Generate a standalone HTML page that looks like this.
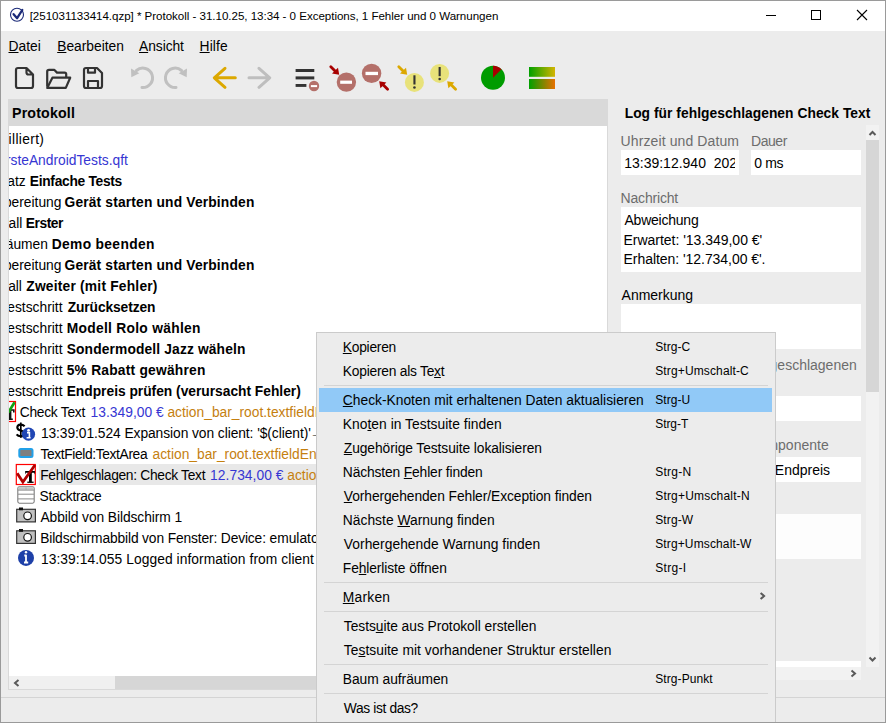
<!DOCTYPE html><html><head><meta charset="utf-8"><style>
html,body{margin:0;padding:0}
body{width:886px;height:723px;position:relative;overflow:hidden;background:#ececec;font-family:"Liberation Sans",sans-serif}
.t{position:absolute;white-space:pre;line-height:normal}
u{text-decoration:underline;text-underline-offset:1px;text-decoration-thickness:1px}
svg{position:absolute;overflow:visible}
</style></head><body>
<div style="position:absolute;left:0px;top:0px;width:886px;height:31px;background:#fff;"></div>
<svg style="left:0;top:0" width="40" height="31"><circle cx="17" cy="14.8" r="6.5" fill="none" stroke="#1b2a78" stroke-width="1.1"/><path d="M13.6 14.2 L17.1 18.2 L22.3 10" fill="none" stroke="#1b2a78" stroke-width="2.3" stroke-linejoin="round" stroke-linecap="round"/></svg>
<div class="t" style="left:29.70px;top:9.00px;font-size:11.6px;font-weight:400;color:#000;letter-spacing:-0.043px;">[251031133414.qzp] * Protokoll - 31.10.25, 13:34 - 0 Exceptions, 1 Fehler und 0 Warnungen</div>
<svg style="left:0;top:0" width="886" height="31"><path d="M766 15.5 H776" stroke="#000" stroke-width="1"/><rect x="811.5" y="10.5" width="9" height="9" fill="none" stroke="#000" stroke-width="1"/><path d="M857 10 L867 20 M867 10 L857 20" stroke="#000" stroke-width="1.1"/></svg>
<div class="t" style="left:8.50px;top:39.00px;font-size:13.8px;font-weight:400;color:#000;letter-spacing:0.025px;"><u>D</u>atei</div>
<div class="t" style="left:57.20px;top:39.00px;font-size:13.8px;font-weight:400;color:#000;"><u>B</u>earbeiten</div>
<div class="t" style="left:139.00px;top:39.00px;font-size:13.8px;font-weight:400;color:#000;letter-spacing:-0.05px;"><u>A</u>nsicht</div>
<div class="t" style="left:199.60px;top:39.00px;font-size:13.8px;font-weight:400;color:#000;letter-spacing:0.1px;"><u>H</u>ilfe</div>
<svg style="left:0;top:0" width="600" height="98">
<g fill="none" stroke="#333" stroke-width="2.2" stroke-linejoin="round" stroke-linecap="round">
<path d="M26.5 68 H18 Q16 68 16 70 V86 Q16 88 18 88 H31 Q33 88 33 86 V74.5 Z M26.5 68 V72.5 Q26.5 74.5 28.5 74.5 H33"/>
<path d="M47.2 86 V71.5 Q47.2 69.8 49 69.8 H54.2 L57 72.6 H64.6 Q66.2 72.6 66.2 74.2 V77"/>
<path d="M47.2 87.9 L52.4 77.7 H70.2 L65.8 87.9 Z"/>
<path d="M97 68 H86 Q84 68 84 70 V86 Q84 88 86 88 H100 Q102 88 102 86 V73 Z"/>
<path d="M88 68 V72.7 H95 V68"/>
<path d="M88 88 V81 H98 V88"/>
</g>
<g fill="none" stroke="#c0c0c0" stroke-width="3" stroke-linecap="round">
<path d="M142 87.5 A9.7 9.7 0 1 0 136.5 70.5"/>
<path d="M176 87.5 A9.7 9.7 0 1 1 181.5 70.5"/>
</g>
<path d="M131 68.5 L131.3 77.2 L139.3 73.2 Z" fill="#c0c0c0"/>
<path d="M187 68.5 L186.7 77.2 L178.7 73.2 Z" fill="#c0c0c0"/>
<g fill="none" stroke-width="3" stroke-linecap="round" stroke-linejoin="round">
<path d="M235.3 77.8 H214.5 M225 68.3 L214.3 77.8 L225 87.3" stroke="#dca800"/>
<path d="M249 77.8 H269.5 M259 68.3 L269.7 77.8 L259 87.3" stroke="#bebebe"/>
</g>
<g fill="#333"><rect x="295.6" y="69" width="18.7" height="3"/><rect x="295.6" y="76.4" width="18.7" height="3"/><rect x="295.6" y="84" width="10.8" height="2.9"/></g>
<circle cx="314" cy="86" r="5.2" fill="#b4706a"/><rect x="310.9" y="85.1" width="6.2" height="2" fill="#fff"/>
<circle cx="346.4" cy="82.1" r="9.7" fill="#b4706a"/><rect x="340.2" y="80.6" width="11.8" height="3.2" fill="#fff"/>
<circle cx="371.6" cy="73.4" r="9.7" fill="#b4706a"/><rect x="365.5" y="71.8" width="12.5" height="3.3" fill="#fff"/>
<path d="M330.8 66.8 L335.8 71.8" stroke="#a80000" stroke-width="2.8" stroke-linecap="round"/>
<path d="M339.2 74.8 L332 73.6 L338 67.8 Z" fill="#a80000"/>
<path d="M387.6 89.2 L382.6 84.2" stroke="#a80000" stroke-width="2.8" stroke-linecap="round"/>
<path d="M379.2 81.2 L386.4 82.4 L380.4 88.2 Z" fill="#a80000"/>
<circle cx="414.4" cy="82.4" r="9.5" fill="#e8e27a"/><rect x="413.4" y="75.3" width="2.1" height="9.2" fill="#333"/><circle cx="414.45" cy="87.5" r="1.3" fill="#333"/>
<circle cx="439.6" cy="73.4" r="9.5" fill="#e8e27a"/><rect x="438.6" y="67" width="2.1" height="9.2" fill="#333"/><circle cx="439.65" cy="79" r="1.3" fill="#333"/>
<path d="M398.8 66.8 L403.8 71.8" stroke="#dca800" stroke-width="2.8" stroke-linecap="round"/>
<path d="M407.2 74.8 L400 73.6 L406 67.8 Z" fill="#dca800"/>
<path d="M455.6 89.2 L450.6 84.2" stroke="#dca800" stroke-width="2.8" stroke-linecap="round"/>
<path d="M447.2 81.2 L454.4 82.4 L448.4 88.2 Z" fill="#dca800"/>
<circle cx="493" cy="77.8" r="12" fill="#009c00"/>
<path d="M493 77.8 V65.8 A12 12 0 0 1 501.5 69.3 Z" fill="#a80000"/>
<defs><linearGradient id="g1" x1="0" x2="1"><stop offset="0" stop-color="#00a000"/><stop offset="1" stop-color="#d4b400"/></linearGradient>
<linearGradient id="g2" x1="0" x2="1"><stop offset="0" stop-color="#00a000"/><stop offset="1" stop-color="#e87000"/></linearGradient></defs>
<rect x="529" y="67" width="26" height="9.8" fill="url(#g1)"/>
<rect x="529" y="79" width="26" height="10" fill="url(#g2)"/>
</svg>
<div style="position:absolute;left:8px;top:99px;width:600px;height:27px;background:#d9d9d9;"></div>
<div class="t" style="left:12.00px;top:105.00px;font-size:14.2px;font-weight:700;color:#000;letter-spacing:0.175px;">Protokoll</div>
<div style="position:absolute;left:8px;top:126px;width:600px;height:564px;background:#fff;box-sizing:border-box;border:1px solid #d9d9d9;border-top:none"></div>
<div style="position:absolute;left:39px;top:464px;width:568px;height:21px;background:#e8e8e8;"></div>
<div class="t" style="left:8.60px;top:132.00px;font-size:13.8px;font-weight:400;color:#000;letter-spacing:0.343px;">illiert)</div>
<div class="t" style="left:-3.30px;top:153.00px;font-size:13.8px;font-weight:400;color:#3636d2;">ErsteAndroidTests.qft</div>
<div class="t" style="left:-42.50px;top:174.00px;font-size:13.8px;font-weight:400;color:#000;">Testfallsatz</div>
<div class="t" style="left:29.80px;top:174.00px;font-size:13.8px;font-weight:700;color:#000;letter-spacing:-0.3px;">Einfache Tests</div>
<div class="t" style="left:-16.80px;top:195.00px;font-size:13.8px;font-weight:400;color:#000;">Vorbereitung</div>
<div class="t" style="left:64.50px;top:195.00px;font-size:13.8px;font-weight:700;color:#000;letter-spacing:0.165px;">Gerät starten und Verbinden</div>
<div class="t" style="left:-20.60px;top:216.00px;font-size:13.8px;font-weight:400;color:#000;">Testfall</div>
<div class="t" style="left:25.70px;top:216.00px;font-size:13.8px;font-weight:700;color:#000;letter-spacing:-0.42px;">Erster</div>
<div class="t" style="left:-19.60px;top:237.00px;font-size:13.8px;font-weight:400;color:#000;">Aufräumen</div>
<div class="t" style="left:51.70px;top:237.00px;font-size:13.8px;font-weight:700;color:#000;letter-spacing:0.345px;">Demo beenden</div>
<div class="t" style="left:-16.80px;top:258.00px;font-size:13.8px;font-weight:400;color:#000;">Vorbereitung</div>
<div class="t" style="left:64.50px;top:258.00px;font-size:13.8px;font-weight:700;color:#000;letter-spacing:0.165px;">Gerät starten und Verbinden</div>
<div class="t" style="left:-21.00px;top:279.00px;font-size:13.8px;font-weight:400;color:#000;">Testfall</div>
<div class="t" style="left:26.30px;top:279.00px;font-size:13.8px;font-weight:700;color:#000;letter-spacing:0.205px;">Zweiter (mit Fehler)</div>
<div class="t" style="left:0.40px;top:300.00px;font-size:13.8px;font-weight:400;color:#000;">Testschritt</div>
<div class="t" style="left:67.70px;top:300.00px;font-size:13.8px;font-weight:700;color:#000;letter-spacing:-0.109px;">Zurücksetzen</div>
<div class="t" style="left:0.40px;top:321.00px;font-size:13.8px;font-weight:400;color:#000;">Testschritt</div>
<div class="t" style="left:66.70px;top:321.00px;font-size:13.8px;font-weight:700;color:#000;letter-spacing:0.294px;">Modell Rolo wählen</div>
<div class="t" style="left:0.40px;top:342.00px;font-size:13.8px;font-weight:400;color:#000;">Testschritt</div>
<div class="t" style="left:66.70px;top:342.00px;font-size:13.8px;font-weight:700;color:#000;letter-spacing:0.135px;">Sondermodell Jazz wäheln</div>
<div class="t" style="left:0.40px;top:363.00px;font-size:13.8px;font-weight:400;color:#000;">Testschritt</div>
<div class="t" style="left:66.70px;top:363.00px;font-size:13.8px;font-weight:700;color:#000;letter-spacing:0.224px;">5% Rabatt gewähren</div>
<div class="t" style="left:0.40px;top:384.00px;font-size:13.8px;font-weight:400;color:#000;">Testschritt</div>
<div class="t" style="left:66.70px;top:384.00px;font-size:13.8px;font-weight:700;color:#000;letter-spacing:-0.015px;">Endpreis prüfen (verursacht Fehler)</div>
<div class="t" style="left:19.70px;top:405.00px;font-size:13.8px;font-weight:400;color:#000;letter-spacing:-0.267px;">Check Text</div>
<div class="t" style="left:90.60px;top:405.00px;font-size:13.8px;font-weight:400;color:#3636d2;letter-spacing:0.03px;">13.349,00 €</div>
<div class="t" style="left:167.40px;top:405.00px;font-size:13.8px;font-weight:400;color:#c5800f;">action_bar_root.textfieldEndpreis</div>
<div class="t" style="left:40.90px;top:426.00px;font-size:13.8px;font-weight:400;color:#000;letter-spacing:-0.067px;">13:39:01.524 Expansion von client: '$(client)'</div>
<div class="t" style="left:310.00px;top:426.00px;font-size:13.8px;font-weight:400;color:#000;">→ 'emulator-5554'</div>
<div class="t" style="left:40.50px;top:447.00px;font-size:13.8px;font-weight:400;color:#000;letter-spacing:-0.376px;">TextField:TextArea</div>
<div class="t" style="left:152.50px;top:447.00px;font-size:13.8px;font-weight:400;color:#c5800f;">action_bar_root.textfieldEndpreis</div>
<div class="t" style="left:40.20px;top:468.00px;font-size:13.8px;font-weight:400;color:#000;letter-spacing:-0.312px;">Fehlgeschlagen: Check Text</div>
<div class="t" style="left:210.10px;top:468.00px;font-size:13.8px;font-weight:400;color:#3636d2;letter-spacing:0.05px;">12.734,00 €</div>
<div class="t" style="left:287.30px;top:468.00px;font-size:13.8px;font-weight:400;color:#c5800f;">action_bar_root.textfieldEndpreis</div>
<div class="t" style="left:39.50px;top:489.00px;font-size:13.8px;font-weight:400;color:#000;letter-spacing:-0.322px;">Stacktrace</div>
<div class="t" style="left:40.50px;top:510.00px;font-size:13.8px;font-weight:400;color:#000;letter-spacing:-0.082px;">Abbild von Bildschirm 1</div>
<div class="t" style="left:40.20px;top:531.00px;font-size:13.8px;font-weight:400;color:#000;letter-spacing:-0.139px;">Bildschirmabbild von Fenster: Device:</div>
<div class="t" style="left:269.50px;top:531.00px;font-size:13.8px;font-weight:400;color:#000;">emulator-5554</div>
<div class="t" style="left:40.90px;top:552.00px;font-size:13.8px;font-weight:400;color:#000;letter-spacing:0.071px;">13:39:14.055 Logged information from client</div>
<svg style="left:0;top:0" width="700" height="700">
<rect x="4.5" y="401.5" width="11" height="20" fill="#fff" stroke="#f00" stroke-width="1.2"/>
<path d="M9 410 H13.8 V412.5 M9 409 V419.4 M9 419.2 H12.8" fill="none" stroke="#111" stroke-width="1.6"/><rect x="9" y="409.5" width="2.4" height="10" fill="#111"/>
<path d="M8.3 412.5 L14.6 402.2" stroke="#10a010" stroke-width="2.6"/>
<path d="M20.8 422.5 V437.8" stroke="#000" stroke-width="1.7"/>
<path d="M24.6 426.3 Q23 424.6 20.6 424.6 Q17.2 424.8 17.3 427.6 Q17.5 429.8 20.8 430.6 Q24.2 431.5 24.2 433.8 Q24 436.2 20.6 436.2 Q18 436.2 16.6 434.4" fill="none" stroke="#000" stroke-width="2.1"/>
<circle cx="28.5" cy="434.2" r="6.6" fill="#2046b4"/>
<circle cx="28.6" cy="430.3" r="1.35" fill="#fff"/>
<path d="M27 432.6 H29.4 V437.6 M26.6 437.7 H30.6" fill="none" stroke="#fff" stroke-width="1.6"/>
<rect x="19.3" y="449" width="13.2" height="8" rx="1.5" fill="#7f7f7f" stroke="#22a0e8" stroke-width="2"/>
<rect x="16.3" y="464.5" width="19" height="20" fill="#fff" stroke="#f00" stroke-width="1.2"/>
<path d="M25.2 471 H34.9 V474.6 L34 472.8 H26.1 L25.2 474.6 Z" fill="#000"/><rect x="29" y="472" width="2.8" height="10.3" fill="#000"/><rect x="27.3" y="481.6" width="6.3" height="1.3" fill="#000"/>
<path d="M17.2 473.3 L22.9 482 L35 465" fill="none" stroke="#b00000" stroke-width="2.8"/>
<rect x="17.8" y="486.8" width="16.4" height="16.4" rx="1.6" fill="#fff" stroke="#7e7e7e" stroke-width="1.1"/>
<rect x="18.4" y="487.3" width="15.2" height="2.4" fill="#c4c4c4"/>
<path d="M26 487.3 V489.7" stroke="#a8a8a8" stroke-width="0.8"/>
<path d="M18 490.1 H34 M18 494.2 H34 M18 498.9 H34" stroke="#8a8a8a" stroke-width="1"/>
<g>
<rect x="16.7" y="509.3" width="18.7" height="12.6" fill="#c0c0c0" stroke="#333" stroke-width="1.2"/>
<rect x="19" y="507.5" width="4" height="2.8" fill="#111"/>
<circle cx="27.6" cy="515.8" r="3.8" fill="#fff" stroke="#111" stroke-width="1.2"/>
</g>
<g>
<rect x="16.7" y="530.8" width="18.7" height="12.6" fill="#c0c0c0" stroke="#333" stroke-width="1.2"/>
<rect x="19" y="529" width="4" height="2.8" fill="#111"/>
<circle cx="27.6" cy="537.3" r="3.8" fill="#fff" stroke="#111" stroke-width="1.2"/>
</g>
<circle cx="26" cy="557.9" r="8" fill="#1e40a8"/>
<path d="M26 555 V562.5 M24 562.5 H28.2 M24.3 555.5 H26.5" stroke="#fff" stroke-width="1.8"/><circle cx="26" cy="552.3" r="1.2" fill="#fff"/>
</svg>
<div style="position:absolute;left:1px;top:126px;width:7px;height:571px;background:#ececec;"></div>
<div style="position:absolute;left:8px;top:126px;width:1px;height:564px;background:#d9d9d9;"></div>
<div style="position:absolute;left:9px;top:676px;width:598px;height:13px;background:#f0f0f0;"></div>
<div style="position:absolute;left:115px;top:676px;width:492px;height:13px;background:#d6d6d6;"></div>
<svg style="left:0;top:0" width="40" height="700"><path d="M18.5 680 L15 683 L18.5 686" fill="none" stroke="#5a5a5a" stroke-width="2"/></svg>
<div style="position:absolute;left:607px;top:126px;width:1px;height:571px;background:#d9d9d9;"></div>
<div style="position:absolute;left:1px;top:697px;width:884px;height:1px;background:#d4d4d4;"></div>
<div class="t" style="left:624.70px;top:106.00px;font-size:13.8px;font-weight:700;color:#000;letter-spacing:0.041px;">Log für fehlgeschlagenen Check Text</div>
<div class="t" style="left:620.60px;top:133.00px;font-size:14px;font-weight:400;color:#6d6d6d;letter-spacing:0.106px;">Uhrzeit und Datum</div>
<div class="t" style="left:751.00px;top:133.00px;font-size:14px;font-weight:400;color:#6d6d6d;letter-spacing:-0.45px;">Dauer</div>
<div style="position:absolute;left:621px;top:150px;width:118px;height:25px;background:#fff;"></div>
<div style="position:absolute;left:621px;top:150px;width:114px;height:25px;overflow:hidden"><div class="t" style="left:3.20px;top:5.00px;font-size:14px;font-weight:400;color:#000;">13:39:12.940  2025</div></div>
<div style="position:absolute;left:751px;top:150px;width:110px;height:25px;background:#fff;"></div>
<div class="t" style="left:754.30px;top:155.00px;font-size:14px;font-weight:400;color:#000;letter-spacing:-0.367px;">0 ms</div>
<div class="t" style="left:620.60px;top:190.00px;font-size:14px;font-weight:400;color:#6d6d6d;letter-spacing:-0.188px;">Nachricht</div>
<div style="position:absolute;left:621px;top:207px;width:240px;height:65px;background:#fff;"></div>
<div class="t" style="left:624.50px;top:212.00px;font-size:14px;font-weight:400;color:#000;letter-spacing:-0.233px;">Abweichung</div>
<div class="t" style="left:623.50px;top:232.00px;font-size:14px;font-weight:400;color:#000;letter-spacing:-0.023px;">Erwartet: '13.349,00 €'</div>
<div class="t" style="left:623.50px;top:251.00px;font-size:14px;font-weight:400;color:#000;letter-spacing:-0.048px;">Erhalten: '12.734,00 €'.</div>
<div class="t" style="left:621.60px;top:287.00px;font-size:14px;font-weight:400;color:#000;letter-spacing:-0.025px;">Anmerkung</div>
<div style="position:absolute;left:621px;top:304px;width:240px;height:45px;background:#fff;"></div>
<div class="t" style="left:700.30px;top:357.00px;font-size:14px;font-weight:400;color:#6d6d6d;">Anzahl fehlgeschlagenen</div>
<div style="position:absolute;left:621px;top:396px;width:240px;height:25px;background:#fff;"></div>
<div class="t" style="left:749.30px;top:437.00px;font-size:14px;font-weight:400;color:#6d6d6d;">Komponente</div>
<div style="position:absolute;left:621px;top:457px;width:240px;height:25px;background:#fff;"></div>
<div class="t" style="left:726.60px;top:462.00px;font-size:14px;font-weight:400;color:#000;">textfieldEndpreis</div>
<div style="position:absolute;left:621px;top:514px;width:240px;height:45px;background:#fdfdfd;"></div>
<div style="position:absolute;left:621px;top:661px;width:240px;height:6px;background:#fff;"></div>
<div style="position:absolute;left:621px;top:667px;width:240px;height:13px;background:#f2f2f2;"></div>
<svg style="left:0;top:0" width="886" height="723"><path d="M851.5 670.5 L855 673.5 L851.5 676.5" fill="none" stroke="#5a5a5a" stroke-width="2"/></svg>
<div style="position:absolute;left:866px;top:125px;width:13px;height:542px;background:#f2f2f2;"></div>
<div style="position:absolute;left:866px;top:140px;width:13px;height:252px;background:#d6d6d6;"></div>
<svg style="left:0;top:0" width="886" height="723"><path d="M869.5 135 L872.5 132 L875.5 135" fill="none" stroke="#5a5a5a" stroke-width="2"/><path d="M869.5 657.5 L872.5 660.5 L875.5 657.5" fill="none" stroke="#5a5a5a" stroke-width="2"/></svg>
<div style="position:absolute;left:316px;top:332px;width:460px;height:391px;background:#ececec;box-sizing:border-box;border:1px solid #cbcbcb;border-bottom:none"></div>
<div style="position:absolute;left:319px;top:388px;width:453px;height:24px;background:#91c9f7;"></div>
<div class="t" style="left:342.80px;top:340.00px;font-size:13.8px;font-weight:400;color:#000;letter-spacing:-0.257px;"><u>K</u>opieren</div>
<div class="t" style="left:655.20px;top:340.00px;font-size:12px;font-weight:400;color:#000;letter-spacing:0.06px;">Strg-C</div>
<div class="t" style="left:342.80px;top:364.00px;font-size:13.8px;font-weight:400;color:#000;letter-spacing:-0.238px;">Kopieren als Te<u>x</u>t</div>
<div class="t" style="left:655.20px;top:364.00px;font-size:12px;font-weight:400;color:#000;letter-spacing:0.136px;">Strg+Umschalt-C</div>
<div class="t" style="left:342.80px;top:393.00px;font-size:13.8px;font-weight:400;color:#000;letter-spacing:0.007px;"><u>C</u>heck-Knoten mit erhaltenen Daten aktualisieren</div>
<div class="t" style="left:655.20px;top:393.00px;font-size:12px;font-weight:400;color:#000;letter-spacing:0.06px;">Strg-U</div>
<div class="t" style="left:342.80px;top:417.00px;font-size:13.8px;font-weight:400;color:#000;letter-spacing:0.04px;">Kno<u>t</u>en in Testsuite finden</div>
<div class="t" style="left:655.20px;top:417.00px;font-size:12px;font-weight:400;color:#000;letter-spacing:-0.06px;">Strg-T</div>
<div class="t" style="left:343.80px;top:441.00px;font-size:13.8px;font-weight:400;color:#000;letter-spacing:-0.078px;"><u>Z</u>ugehörige Testsuite lokalisieren</div>
<div class="t" style="left:342.80px;top:465.00px;font-size:13.8px;font-weight:400;color:#000;letter-spacing:-0.129px;">Nächsten <u>F</u>ehler finden</div>
<div class="t" style="left:655.20px;top:465.00px;font-size:12px;font-weight:400;color:#000;letter-spacing:0.28px;">Strg-N</div>
<div class="t" style="left:343.80px;top:489.00px;font-size:13.8px;font-weight:400;color:#000;letter-spacing:-0.073px;"><u>V</u>orhergehenden Fehler/Exception finden</div>
<div class="t" style="left:655.20px;top:489.00px;font-size:12px;font-weight:400;color:#000;letter-spacing:0.193px;">Strg+Umschalt-N</div>
<div class="t" style="left:342.80px;top:513.00px;font-size:13.8px;font-weight:400;color:#000;letter-spacing:0.024px;">Nächste <u>W</u>arnung finden</div>
<div class="t" style="left:655.20px;top:513.00px;font-size:12px;font-weight:400;color:#000;letter-spacing:0.12px;">Strg-W</div>
<div class="t" style="left:343.80px;top:537.00px;font-size:13.8px;font-weight:400;color:#000;letter-spacing:0.044px;">Vorher<u>g</u>ehende Warnung finden</div>
<div class="t" style="left:655.20px;top:537.00px;font-size:12px;font-weight:400;color:#000;letter-spacing:0.129px;">Strg+Umschalt-W</div>
<div class="t" style="left:342.80px;top:561.00px;font-size:13.8px;font-weight:400;color:#000;letter-spacing:-0.094px;">Fe<u>h</u>lerliste öffnen</div>
<div class="t" style="left:655.20px;top:561.00px;font-size:12px;font-weight:400;color:#000;letter-spacing:0.3px;">Strg-I</div>
<div class="t" style="left:342.80px;top:590.00px;font-size:13.8px;font-weight:400;color:#000;letter-spacing:0.24px;"><u>M</u>arken</div>
<div class="t" style="left:343.80px;top:619.00px;font-size:13.8px;font-weight:400;color:#000;letter-spacing:-0.047px;">Tests<u>u</u>ite aus Protokoll erstellen</div>
<div class="t" style="left:343.80px;top:643.00px;font-size:13.8px;font-weight:400;color:#000;letter-spacing:0.033px;">Te<u>s</u>tsuite mit vorhandener Struktur erstellen</div>
<div class="t" style="left:342.80px;top:672.00px;font-size:13.8px;font-weight:400;color:#000;letter-spacing:-0.031px;">Baum aufräumen</div>
<div class="t" style="left:655.20px;top:672.00px;font-size:12px;font-weight:400;color:#000;letter-spacing:0.089px;">Strg-Punkt</div>
<div class="t" style="left:343.80px;top:701.00px;font-size:13.8px;font-weight:400;color:#000;letter-spacing:-0.364px;">Was ist das?</div>
<div style="position:absolute;left:324px;top:385px;width:444px;height:1px;background:#d4d4d4;"></div>
<div style="position:absolute;left:324px;top:582px;width:444px;height:1px;background:#d4d4d4;"></div>
<div style="position:absolute;left:324px;top:611px;width:444px;height:1px;background:#d4d4d4;"></div>
<div style="position:absolute;left:324px;top:664px;width:444px;height:1px;background:#d4d4d4;"></div>
<div style="position:absolute;left:324px;top:693px;width:444px;height:1px;background:#d4d4d4;"></div>
<svg style="left:0;top:0" width="886" height="723"><path d="M760.6 592.9 L764.1 596 L760.6 599.1" fill="none" stroke="#5a5a5a" stroke-width="2"/></svg>
<div style="position:absolute;left:0;top:0;width:886px;height:723px;box-sizing:border-box;border:1px solid #9a9a9a"></div>
</body></html>
